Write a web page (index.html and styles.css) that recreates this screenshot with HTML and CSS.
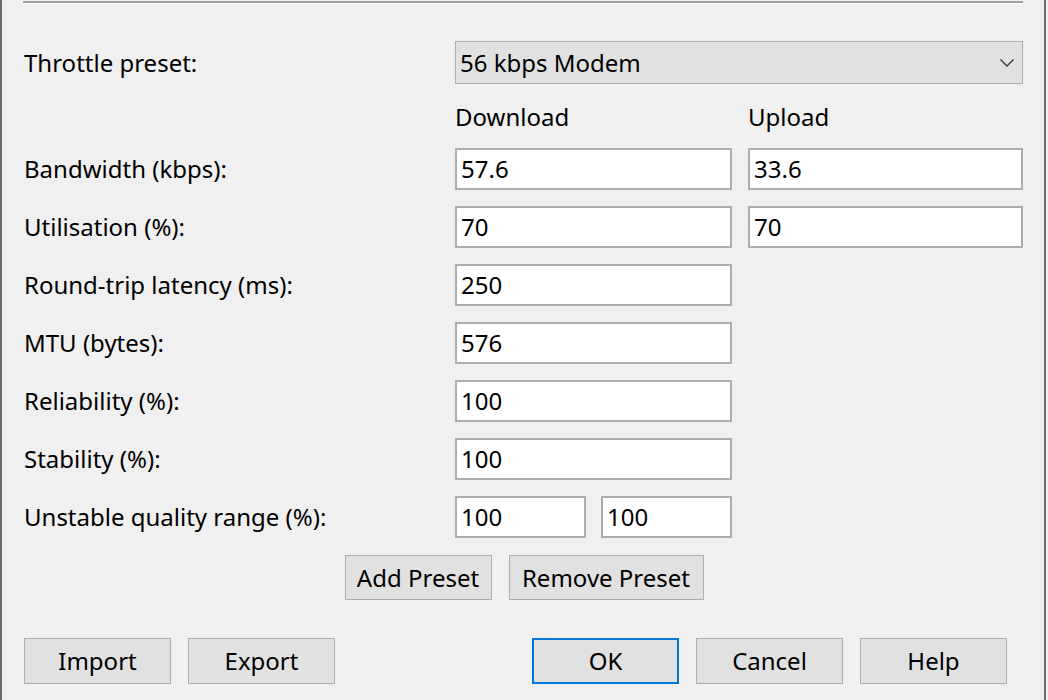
FILE: index.html
```html
<!DOCTYPE html>
<html>
<head>
<meta charset="utf-8">
<link rel="stylesheet" href="styles.css">
</head>
<body>
<div class="window">
  <div class="separator"></div>
  <div class="form">
    <div class="row row-combo">
      <div class="label">Throttle preset:</div>
      <div class="combo">
        <span class="combo-text">56 kbps Modem</span>
        <svg class="chevron" width="14" height="8" viewBox="0 0 14 8"><path d="M0.5 0.5 L7 7 L13.5 0.5" fill="none" stroke="#333" stroke-width="1.3"/></svg>
      </div>
    </div>
    <div class="row row-head">
      <div class="label"></div>
      <div class="head">Download</div>
      <div class="head">Upload</div>
    </div>
    <div class="row">
      <div class="label">Bandwidth (kbps):</div>
      <div class="field">57.6</div>
      <div class="field">33.6</div>
    </div>
    <div class="row">
      <div class="label">Utilisation (%):</div>
      <div class="field">70</div>
      <div class="field">70</div>
    </div>
    <div class="row">
      <div class="label">Round-trip latency (ms):</div>
      <div class="field">250</div>
    </div>
    <div class="row">
      <div class="label">MTU (bytes):</div>
      <div class="field">576</div>
    </div>
    <div class="row">
      <div class="label">Reliability (%):</div>
      <div class="field">100</div>
    </div>
    <div class="row">
      <div class="label">Stability (%):</div>
      <div class="field">100</div>
    </div>
    <div class="row">
      <div class="label">Unstable quality range (%):</div>
      <div class="split">
        <div class="field">100</div>
        <div class="field">100</div>
      </div>
    </div>
  </div>
  <div class="preset-buttons">
    <div class="btn btn-add">Add Preset</div>
    <div class="btn btn-remove">Remove Preset</div>
  </div>
  <div class="bottom-buttons">
    <div class="group">
      <div class="btn">Import</div>
      <div class="btn">Export</div>
    </div>
    <div class="group">
      <div class="btn btn-default">OK</div>
      <div class="btn">Cancel</div>
      <div class="btn">Help</div>
    </div>
  </div>
</div>
</body>
</html>
```
FILE: styles.css
```css
html, body {
  margin: 0;
  padding: 0;
  background: #f0f0f0;
}
body {
  font-family: "Noto Sans", "Open Sans", sans-serif;
  font-size: 24px;
  color: #000;
}
.window {
  box-sizing: border-box;
  width: 1046px;
  height: 700px;
  border-left: 2px solid #6e6e6e;
  border-right: 2px solid #6e6e6e;
  background: #f0f0f0;
  overflow: hidden;
}
.separator {
  margin: 1px 0 0 21px;
  width: 1000px;
  height: 0;
  border-top: 2px solid #a0a0a0;
  border-bottom: 1px solid #ffffff;
}
.form {
  margin-top: 37px;
  padding-left: 22px;
  display: flex;
  flex-direction: column;
  gap: 16px;
}
.row {
  display: grid;
  grid-template-columns: 415px 277px 275px;
  column-gap: 16px;
  height: 42px;
  align-items: center;
}
.row-combo {
  grid-template-columns: 415px 568px;
  height: 43px;
  margin-bottom: -16px;
}
.row-head {
  height: 64px;
  align-items: center;
  margin-bottom: -16px;
}
.label {
  line-height: 42px;
  white-space: nowrap;
}
.head {
  line-height: 42px;
  margin-top: 2px;
}
.combo {
  box-sizing: border-box;
  height: 43px;
  border: 1px solid #adadad;
  background: #e1e1e1;
  display: flex;
  align-items: center;
  justify-content: space-between;
  padding: 0 8px 0 4px;
}
.combo-text {
  line-height: 40px;
}
.chevron {
  display: block;
  margin-top: 1px;
}
.field {
  box-sizing: border-box;
  height: 42px;
  border: 2px solid #adadad;
  background: #fff;
  padding-left: 4px;
  line-height: 38px;
}
.split {
  display: grid;
  grid-template-columns: 131px 131px;
  column-gap: 15px;
}
.btn {
  box-sizing: border-box;
  width: 147px;
  height: 46px;
  border: 1px solid #adadad;
  background: #e1e1e1;
  display: flex;
  align-items: center;
  justify-content: center;
  line-height: 1;
}
.preset-buttons {
  margin-top: 17px;
  display: flex;
  justify-content: center;
  gap: 17px;
  padding-left: 2px;
}
.btn-add {
  height: 45px;
  width: 147px;
}
.btn-remove {
  height: 45px;
  width: 195px;
}
.bottom-buttons {
  margin-top: 38px;
  display: flex;
  justify-content: space-between;
  padding: 0 37px 0 22px;
}
.group {
  display: flex;
  gap: 17px;
}
.btn-default {
  border: 2px solid #0078d7;
}
```
